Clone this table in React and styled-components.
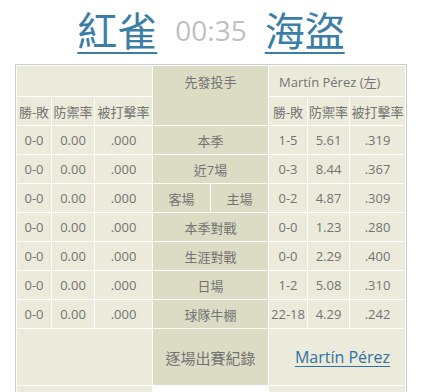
import React from "react";
import styled, { createGlobalStyle } from "styled-components";

const Global = createGlobalStyle`
  html, body { margin: 0; padding: 0; background: #fff; }
  body { font-family: "Open Sans", "Noto Sans CJK TC", sans-serif; }
`;

const Page = styled.div`
  padding-left: 15px;
  width: 392px;
`;

const Title = styled.div`
  display: flex;
  justify-content: center;
  align-items: center;
  gap: 18px;
  height: 64px;
  box-sizing: border-box;
  padding-bottom: 6px;
`;

const TeamLink = styled.a`
  font-family: "Noto Sans CJK TC", sans-serif;
  font-size: 40px;
  line-height: 1;
  color: #3a7ea6;
  text-decoration: underline;
  text-decoration-thickness: 2px;
  text-underline-offset: 6px;
  cursor: pointer;
`;

const Clock = styled.span`
  font-family: "Open Sans", sans-serif;
  font-size: 28px;
  line-height: 1;
  color: #c0c0c0;
  margin-top: 2px;
`;

const Board = styled.div`
  border: 1px solid #cccccc;
  padding: 1px;
  background: #fff;
`;

const Grid = styled.div`
  display: grid;
  grid-template-columns: 34px 42px 57px 57px 57px 38px 41px 55px;
  grid-template-rows: 30px 28px repeat(7, 28px) 56px 28px;
  gap: 1px;
`;

const tones = { light: "#ecebdb", dark: "#dcdcc5", white: "#ffffff" };

const Cell = styled.div`
  background: ${(p) => tones[p.$tone || "light"]};
  grid-column: span ${(p) => p.$span || 1};
  grid-row: span ${(p) => p.$rows || 1};
  display: flex;
  align-items: ${(p) => (p.$top ? "flex-start" : "center")};
  justify-content: ${(p) => (p.$left ? "flex-start" : "center")};
  padding-left: ${(p) => p.$pl || 0}px;
  padding-top: ${(p) => p.$pt || 0}px;
  box-sizing: border-box;
  font-size: ${(p) => p.$size || 13}px;
  color: #737373;
  white-space: nowrap;
  overflow: hidden;
`;

const PlayerLink = styled.a`
  font-family: "Open Sans", sans-serif;
  font-size: 16px;
  color: #2f73a5;
  text-decoration: underline;
  text-underline-offset: 3px;
  cursor: pointer;
`;

const rows = [
  ["本季", "1-5", "5.61", ".319"],
  ["近7場", "0-3", "8.44", ".367"],
  [["客場", "主場"], "0-2", "4.87", ".309"],
  ["本季對戰", "0-0", "1.23", ".280"],
  ["生涯對戰", "0-0", "2.29", ".400"],
  ["日場", "1-2", "5.08", ".310"],
  ["球隊牛棚", "22-18", "4.29", ".242"],
];

const heads = ["勝-敗", "防禦率", "被打擊率"];

export default function App() {
  return (
    <Page>
      <Global />
      <Title>
        <TeamLink>紅雀</TeamLink>
        <Clock>00:35</Clock>
        <TeamLink>海盜</TeamLink>
      </Title>
      <Board>
        <Grid>
          <Cell $span={3} />
          <Cell $span={2} $rows={2} $tone="dark" $top $pt={6}>
            先發投手
          </Cell>
          <Cell $span={3} $left $pl={10}>
            Martín Pérez (左)
          </Cell>
          {heads.map((h) => (
            <Cell key={"l" + h}>{h}</Cell>
          ))}
          {heads.map((h) => (
            <Cell key={"r" + h}>{h}</Cell>
          ))}
          {rows.map(([label, w, era, avg], i) => (
            <React.Fragment key={i}>
              <Cell>0-0</Cell>
              <Cell>0.00</Cell>
              <Cell>.000</Cell>
              {Array.isArray(label) ? (
                label.map((l) => (
                  <Cell key={l} $tone="dark">
                    {l}
                  </Cell>
                ))
              ) : (
                <Cell $span={2} $tone="dark">
                  {label}
                </Cell>
              )}
              <Cell>{w}</Cell>
              <Cell>{era}</Cell>
              <Cell>{avg}</Cell>
            </React.Fragment>
          ))}
          <Cell $span={3} />
          <Cell $span={2} $tone="dark" $size={15}>
            逐場出賽紀錄
          </Cell>
          <Cell $span={3} $pl={11}>
            <PlayerLink>Martín Pérez</PlayerLink>
          </Cell>
          <Cell $span={3} />
          <Cell $span={2} $tone="white" />
          <Cell $span={3} />
        </Grid>
      </Board>
    </Page>
  );
}
